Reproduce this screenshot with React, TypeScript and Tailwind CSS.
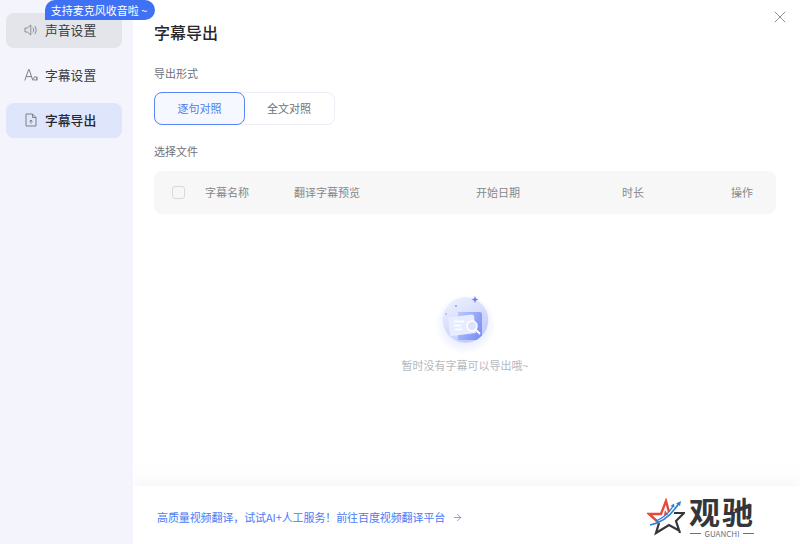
import { ArrowRight, X } from 'lucide-react';

const font = { fontFamily: '"Noto Sans CJK SC", "Liberation Sans", sans-serif' };

function SpeakerIcon() {
  return (
    <svg width="14" height="14" viewBox="0 0 14 14" fill="none" stroke="#8a8d96" strokeWidth="1">
      <path d="M1 5h2.400l3.400-3v10l-3.400-3H1z" strokeLinejoin="round" />
      <path d="M9 4.800c.9 1.300.9 3.100 0 4.400" strokeLinecap="round" />
      <path d="M11 3.200c1.600 2.300 1.600 5.300 0 7.600" strokeLinecap="round" />
    </svg>
  );
}

function FontIcon() {
  return (
    <svg width="14" height="14" viewBox="0 0 14 14" fill="none" stroke="#7d808a" strokeWidth="1">
      <path d="M0.800 12.500 4.600 1.500h.6l3.600 11M2.200 8.600h5.400" />
      <circle cx="11.200" cy="10.500" r="1.700" />
      <path d="M13 8.500v4" />
    </svg>
  );
}

function FileIcon() {
  return (
    <svg width="14" height="14" viewBox="0 0 14 14" fill="none" stroke="#7d808a" strokeWidth="1">
      <path d="M2 1h6.500L12 4.500V13H2z" strokeLinejoin="round" />
      <path d="M8.500 1v3.500H12M7 10.500V7M5.500 8.500 7 7l1.500 1.500" />
    </svg>
  );
}

function EmptyIcon() {
  return (
    <svg width="70" height="70" viewBox="0 0 70 70">
      <defs>
        <linearGradient id="disc" x1="0.2" y1="0" x2="0.8" y2="1">
          <stop offset="0" stopColor="#eff1fe" />
          <stop offset="1" stopColor="#bcc7fb" />
        </linearGradient>
        <linearGradient id="folder" x1="0" y1="0" x2="1" y2="0.600">
          <stop offset="0" stopColor="#bcc8fa" />
          <stop offset="1" stopColor="#7f93f3" />
        </linearGradient>
        <radialGradient id="halo">
          <stop offset="0.6" stopColor="#d3dafd" stopOpacity="0.5" />
          <stop offset="1" stopColor="#d3dafd" stopOpacity="0" />
        </radialGradient>
        <clipPath id="discClip">
          <circle cx="35.500" cy="34" r="22.800" />
        </clipPath>
      </defs>
      <circle cx="35.500" cy="38" r="30" fill="url(#halo)" />
      <circle cx="35.500" cy="34" r="22.800" fill="url(#disc)" />
      <g clipPath="url(#discClip)">
        <path d="M28 26h22a2 2 0 0 1 2 2v26H28z" fill="url(#folder)" />
      </g>
      <path d="M18 31.500 42 28.500a2 2 0 0 1 2 1.500l2 17-24 3a2 2 0 0 1-2-1.500z" fill="#e8ecff" />
      <path d="M24 35.500h10M24 39.500h7M24.500 43.500h8" stroke="#ffffff" strokeWidth="1.300" />
      <circle cx="42" cy="40" r="5" fill="#dde3fe" stroke="#ffffff" strokeWidth="1.500" />
      <path d="m46 44 3.500 3.500" stroke="#ffffff" strokeWidth="1.800" strokeLinecap="round" />
      <path d="M45 10l1 2.500 2.500 1-2.500 1-1 2.500-1-2.500-2.500-1 2.500-1z" fill="#6d82ef" />
      <circle cx="26" cy="20" r="1" fill="#8a9cf2" />
      <circle cx="16" cy="28" r="0.800" fill="#8a9cf2" />
    </svg>
  );
}

function LogoStar() {
  return (
    <svg width="38" height="38" viewBox="0 0 38 38" fill="none">
      <path d="M33 33 22 27 9 35 12 25 M27 15H37L29 23 33 35" stroke="#34363c" strokeWidth="2.200" strokeLinejoin="miter" />
      <path d="M12 25 2 16H14L19 3 22 14" stroke="#e8483a" strokeWidth="2.400" strokeLinejoin="miter" />
      <path d="M12 17H17L18 12 21 17z" fill="#e8483a" />
      <path d="M3 27C14 25 24 18 32 5" stroke="#2f7fd6" strokeWidth="1.600" />
      <path d="M9 23C16 20 22 15 26 8" stroke="#2f7fd6" strokeWidth="1.300" />
      <path d="M29 5.500 34 3 33 8z" fill="#2f7fd6" />
      <path d="M23.500 8 27 5.500 27.500 9.500z" fill="#2f7fd6" />
    </svg>
  );
}

export default function App() {
  return (
    <div className="relative flex h-[544px] w-[800px] overflow-hidden bg-white" style={font}>
      <aside className="relative flex w-[133px] shrink-0 flex-col gap-[10px] bg-[#f3f4fc] px-[6px] pt-[13px]">
        <div className="flex h-[35px] w-[116px] items-center gap-[7px] rounded-lg bg-[#e4e5ea] pb-[2px] pl-[18px] text-[12.800px] text-[#3a3c42]">
          <SpeakerIcon />
          <span>声音设置</span>
        </div>
        <div className="flex h-[35px] w-[116px] items-center gap-[7px] rounded-lg pb-[2px] pl-[18px] text-[12.800px] text-[#3a3c42]">
          <FontIcon />
          <span>字幕设置</span>
        </div>
        <div className="flex h-[35px] w-[116px] items-center gap-[7px] rounded-lg bg-[#dfe5fb] pb-[2px] pl-[18px] text-[12.800px] font-medium text-[#26282e]">
          <FileIcon />
          <span>字幕导出</span>
        </div>
        <div className="absolute left-[45px] top-0 flex h-[20px] w-[110px] items-center justify-center rounded-r-[10px] rounded-tl-[10px] bg-[#3f71f5] pr-[2px] text-[11px] text-white">
          支持麦克风收音啦 ~
        </div>
      </aside>

      <main className="flex min-w-0 flex-1 flex-col">
        <div className="flex-1 pl-[21px] pr-[24px] pt-[20px]">
          <div className="flex items-start justify-between">
            <h1 className="text-[16px] font-medium leading-[24px] text-[#26282e]">字幕导出</h1>
            <button className="mr-[-14px] mt-[-13px] text-[#85878c]">
              <X size={20} strokeWidth={1.1} />
            </button>
          </div>

          <p className="mt-[21px] text-[11px] leading-[16px] text-[#6f7178]">导出形式</p>
          <div className="mt-[11px] flex h-[33px] w-[181px] rounded-lg border border-[#eceef5] text-[11px]">
            <div className="m-[-1px] flex h-[33px] w-[91px] items-center justify-center rounded-lg border border-[#5c86f5] bg-[#f6f8ff] text-[#4b7bf5]">
              逐句对照
            </div>
            <div className="flex flex-1 items-center justify-center text-[#6b6f80]">全文对照</div>
          </div>

          <p className="mt-[18px] text-[11px] leading-[16px] text-[#6f7178]">选择文件</p>
          <div className="mt-[12px] flex h-[43px] items-center rounded-lg bg-[#f7f7f7] pl-[18px] text-[11px] text-[#85878c]">
            <span className="mr-[20px] h-[13px] w-[13px] rounded-[3px] border border-[#d9d9dc] bg-[#f7f7f7]" />
            <span className="w-[89px]">字幕名称</span>
            <span className="w-[182px]">翻译字幕预览</span>
            <span className="w-[146px]">开始日期</span>
            <span className="w-[109px]">时长</span>
            <span>操作</span>
          </div>

          <div className="mt-[72px] flex flex-col items-center">
            <EmptyIcon />
            <p className="mt-px text-[11px] leading-[16px] text-[#b6b8bd]">暂时没有字幕可以导出哦~</p>
          </div>
        </div>

        <footer className="flex h-[58px] items-center justify-between bg-white pl-[24px] pr-[45px] shadow-[0_-6px_12px_rgba(240,240,245,0.5)]">
          <div className="flex items-center gap-[7px] pt-[5px] text-[11px] tracking-[-0.1px] text-[#4b7bf5]">
            <span>高质量视频翻译，试试AI+人工服务！前往百度视频翻译平台</span>
            <ArrowRight size={11} strokeWidth={1.5} />
          </div>
          <div className="flex items-center gap-[4px] pt-[3px]">
            <LogoStar />
            <div className="flex flex-col items-center">
              <span className="text-[31px] font-bold leading-[32px] tracking-[2px] text-[#34363c]">观驰</span>
              <span className="mt-[2px] flex items-center gap-[3px] text-[8px] leading-[9px] text-[#6f7178]">
                <span className="h-px w-[11px] bg-[#6f7178]" />
                GUANCHI
                <span className="h-px w-[11px] bg-[#6f7178]" />
              </span>
            </div>
          </div>
        </footer>
      </main>
    </div>
  );
}
